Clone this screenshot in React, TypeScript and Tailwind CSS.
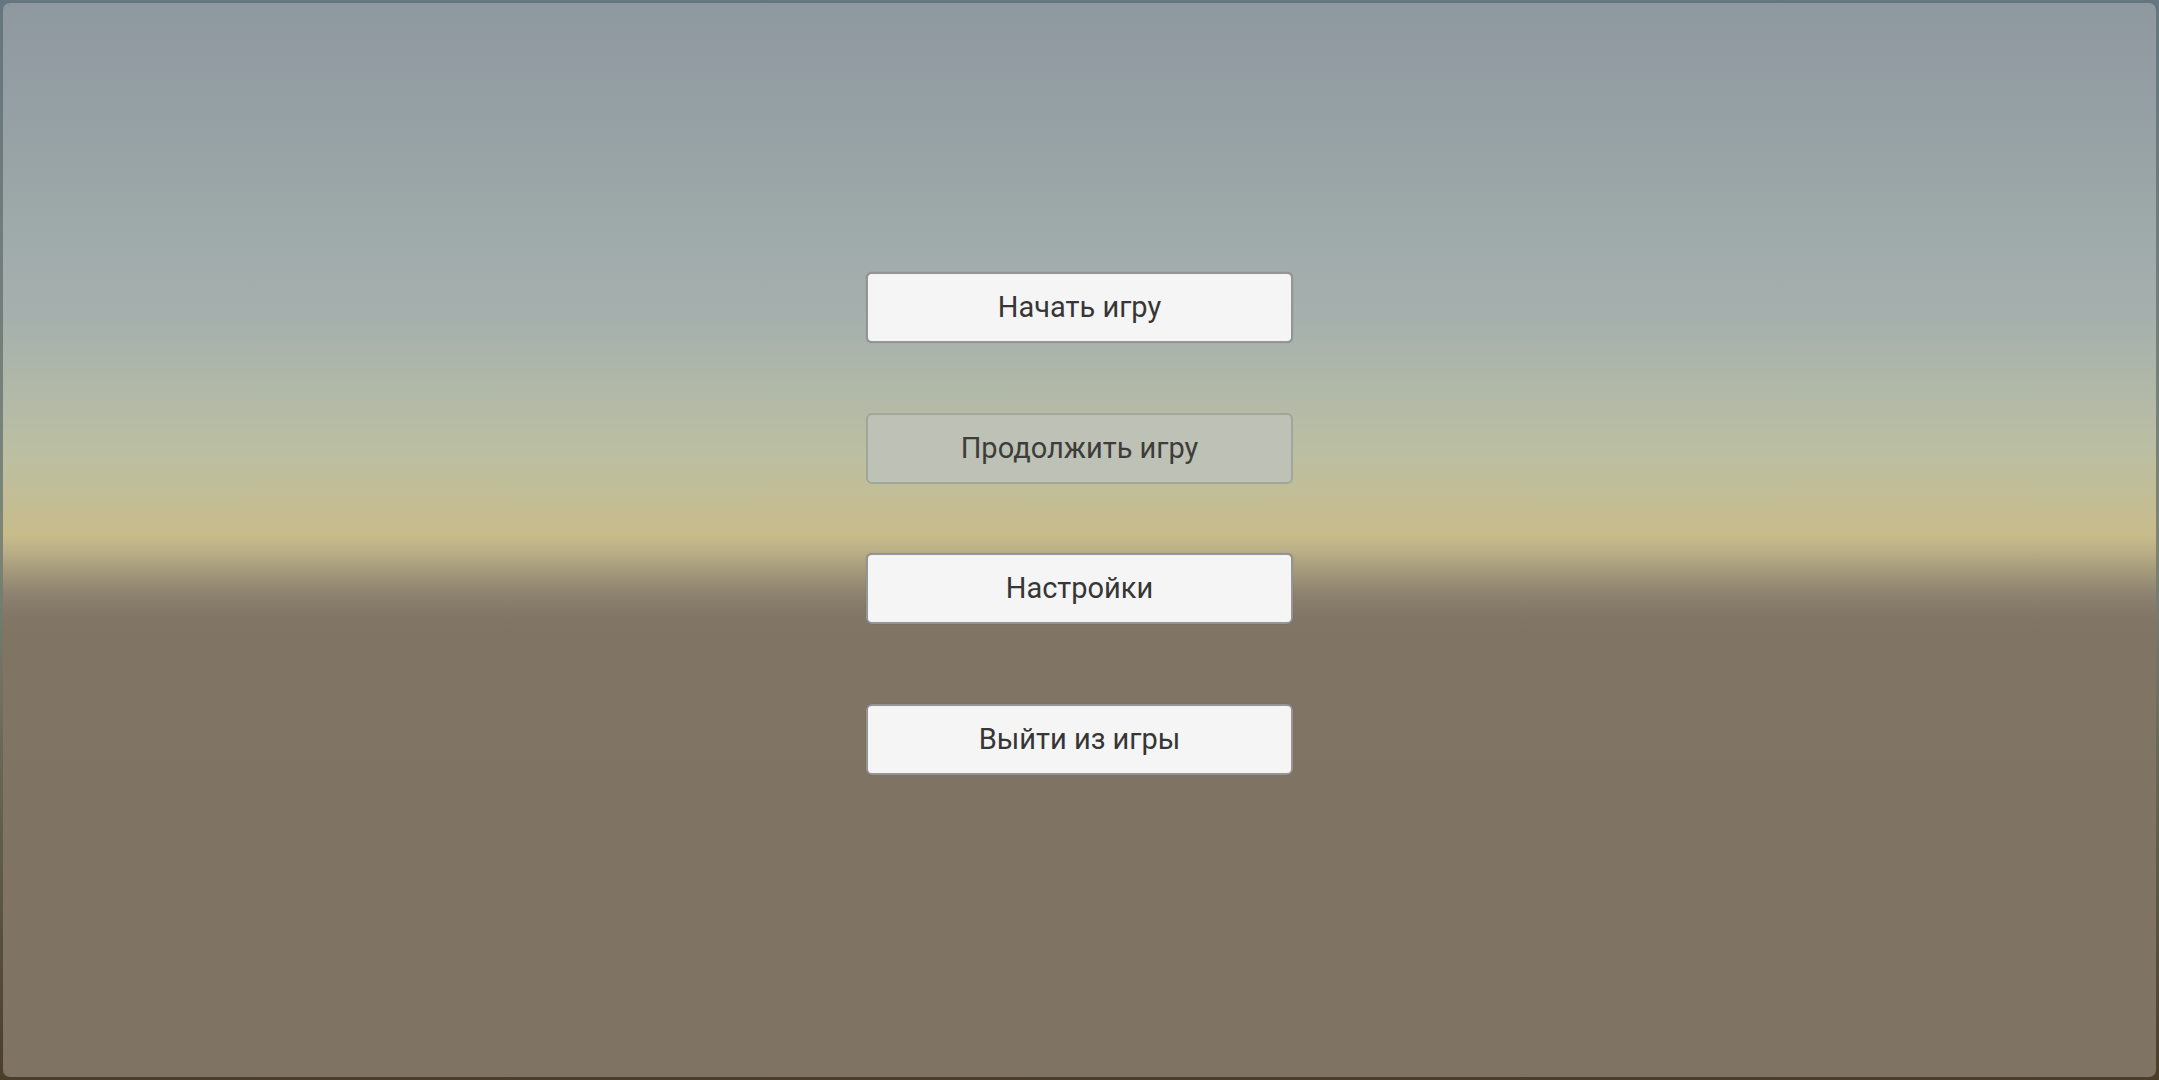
import React from 'react';

const MenuButton = ({ label, disabled }: { label: string; disabled?: boolean }) => {
	return (
		<button
			type="button"
			disabled={disabled}
			className={
				disabled
					? 'flex h-[71px] w-[427px] items-center justify-center rounded-[6px] border-2 border-[#a2a59b] bg-[#bec1b6] text-[29px] text-[#3d3d3a]'
					: 'flex h-[71px] w-[427px] items-center justify-center rounded-[6px] border-2 border-[#959595] bg-[#f5f5f5] text-[29px] text-[#363636] shadow-[0_0_1px_rgba(0,0,0,0.3)]'
			}
			style={{ fontFamily: 'Roboto, "Noto Sans", sans-serif' }}
		>
			{label}
		</button>
	);
};

const App = () => {
	return (
		<div className="h-[1080px] w-[2159px] bg-linear-to-b from-[#66767e] via-[#7d8577] to-[#4a3e2b] p-[3px]">
			<div className="flex h-full w-full flex-col items-center rounded-[7px] bg-[linear-gradient(to_bottom,#8e989f_0px,#98a3a6_150px,#a6b1ae_320px,#bbbfa2_450px,#c8bc8b_532px,#b8ad86_550px,#a29879_570px,#8e8370_590px,#827767_612px,#807565_630px,#7f7464_1074px)] pt-[269px]">
				<MenuButton label="Начать игру" />
				<div className="mt-[70px]">
					<MenuButton label="Продолжить игру" disabled />
				</div>
				<div className="mt-[69px]">
					<MenuButton label="Настройки" />
				</div>
				<div className="mt-[80px]">
					<MenuButton label="Выйти из игры" />
				</div>
			</div>
		</div>
	);
};

export default App;
